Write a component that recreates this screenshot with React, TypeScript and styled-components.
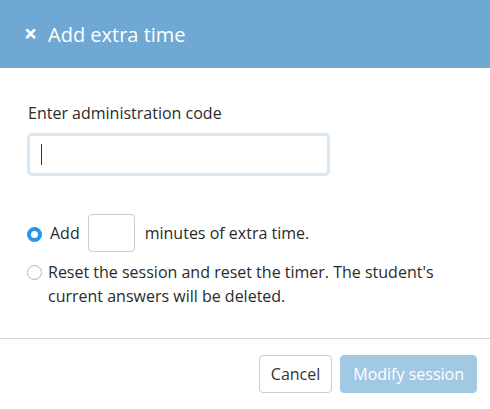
import * as React from 'react'
import styled, { createGlobalStyle } from 'styled-components'

const GlobalStyle = createGlobalStyle`
  html, body {
    margin: 0;
    padding: 0;
    background: #fff;
  }
  body {
    font-family: 'Open Sans', 'Liberation Sans', sans-serif;
    color: #2b2b2b;
  }
`

const Dialog = styled.div`
  width: 490px;
  height: 409px;
  display: flex;
  flex-direction: column;
  background: #fff;
`

const Header = styled.div`
  height: 68px;
  background: #6fa8d3;
  display: flex;
  align-items: center;
  padding: 0 24px;
  color: #fff;
  box-sizing: border-box;
`

const CloseBtn = styled.span`
  font-size: 23px;
  font-weight: 700;
  width: 13px;
  margin: -1px 11px 0 0;
  line-height: 1;
  cursor: pointer;
`

const Title = styled.h2`
  margin: 0;
  font-size: 20px;
  font-weight: 400;
`

const Body = styled.div`
  padding: 34px 28px 0 27px;
  flex: 1;
  border-bottom: 1px solid #d6d6d6;
`

const Label = styled.label`
  display: block;
  font-size: 16px;
  line-height: 22px;
  margin-bottom: 9px;
  padding-left: 1px;
`

const InputWrap = styled.div`
  position: relative;
  width: 303px;
`

const CodeInput = styled.input`
  width: 303px;
  height: 43px;
  box-sizing: border-box;
  border: 3px solid #d7e7f4;
  border-radius: 5px;
  padding: 0 11px;
  font-size: 16px;
  font-family: inherit;
  outline: none;
  caret-color: transparent;
`

const Caret = styled.span`
  position: absolute;
  left: 14px;
  top: 11px;
  width: 1px;
  height: 21px;
  background: #333;
  pointer-events: none;
`

const Options = styled.div`
  margin-top: 38px;
  display: flex;
  flex-direction: column;
  gap: 8px;
`

const Option = styled.label<{ top?: boolean }>`
  display: flex;
  align-items: ${(p) => (p.top ? 'flex-start' : 'center')};
  font-size: 16px;
  line-height: 24px;
`

const Radio = styled.span<{ checked?: boolean }>`
  flex: none;
  width: 15px;
  height: 15px;
  border-radius: 50%;
  box-sizing: border-box;
  margin: ${(p) => (p.checked ? '2px 8px 0 0' : '5px 6px 0 0')};
  border: ${(p) => (p.checked ? '4.5px solid #2196f3' : '1px solid #b5b5b5')};
  background: #fff;
`

const MinutesInput = styled.input`
  width: 47px;
  height: 38px;
  box-sizing: border-box;
  border: 1px solid #ccc;
  border-radius: 4px;
  margin: 0 10px 0 8px;
  outline: none;
`

const Footer = styled.div`
  height: 70px;
  display: flex;
  justify-content: flex-end;
  align-items: flex-start;
  padding: 16px 13px 0 0;
  box-sizing: border-box;
  gap: 8px;
`

const Button = styled.button<{ primary?: boolean }>`
  height: 38px;
  padding: 0 ${(p) => (p.primary ? '12px' : '11px')};
  font-family: inherit;
  font-size: 16px;
  border-radius: 4px;
  border: 1px solid ${(p) => (p.primary ? '#a3c8e3' : '#ccc')};
  background: ${(p) => (p.primary ? '#a3c8e3' : '#fff')};
  color: ${(p) => (p.primary ? '#fff' : '#333')};
`

export default function App() {
  return (
    <Dialog>
      <GlobalStyle />
      <Header>
        <CloseBtn>×</CloseBtn>
        <Title>Add extra time</Title>
      </Header>
      <Body>
        <Label>Enter administration code</Label>
        <InputWrap>
          <CodeInput />
          <Caret />
        </InputWrap>
        <Options>
          <Option>
            <Radio checked />
            Add
            <MinutesInput />
            minutes of extra time.
          </Option>
          <Option top>
            <Radio />
            <span>
              Reset the session and reset the timer. The student's
              <br />
              current answers will be deleted.
            </span>
          </Option>
        </Options>
      </Body>
      <Footer>
        <Button>Cancel</Button>
        <Button primary disabled>
          Modify session
        </Button>
      </Footer>
    </Dialog>
  )
}
